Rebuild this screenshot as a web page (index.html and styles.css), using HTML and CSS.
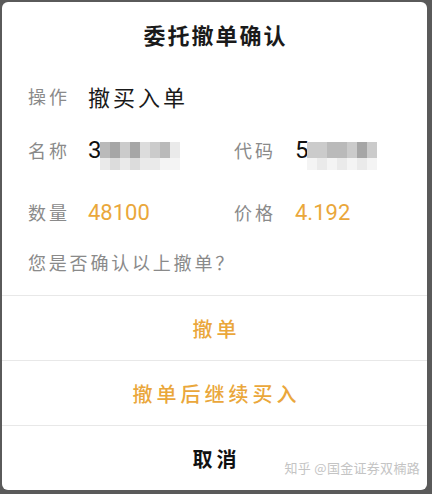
FILE: index.html
```html
<!DOCTYPE html>
<html lang="zh-CN">
<head>
<meta charset="utf-8">
<title>委托撤单确认</title>
<link rel="stylesheet" href="styles.css">
</head>
<body>
<div class="dialog">
  <div class="title">委托撤单确认</div>
  <div class="info">
    <div class="row r1">
      <span class="label">操作</span>
      <span class="value big">撤买入单</span>
    </div>
    <div class="row r2">
      <span class="label">名称</span>
      <span class="value num"><span class="digit">3</span><span class="mosaic m-name">
        <i class="b"></i><i class="a"></i><i class="c"></i><i class="a"></i><i class="d"></i><i class="c"></i><i class="b"></i><i class="e"></i>
        <i class="e"></i><i class="d"></i><i class="e"></i><i class="d"></i><i class="e"></i><i class="e"></i><i class="f"></i><i class="f"></i>
      </span></span>
      <span class="label">代码</span>
      <span class="value num"><span class="digit">5</span><span class="mosaic m-code">
        <i class="c"></i><i class="c"></i><i class="b"></i><i class="b"></i><i class="c"></i><i class="a"></i><i class="c"></i>
        <i class="f"></i><i class="e"></i><i class="f"></i><i class="e"></i><i class="f"></i><i class="e"></i><i class="f"></i>
      </span></span>
    </div>
    <div class="row r3">
      <span class="label">数量</span>
      <span class="value num orange">48100</span>
      <span class="label">价格</span>
      <span class="value num orange">4.192</span>
    </div>
    <div class="question">您是否确认以上撤单？</div>
  </div>
  <div class="actions">
    <div class="btn orange">撤单</div>
    <div class="btn orange">撤单后继续买入</div>
    <div class="btn dark">取消</div>
  </div>
  <div class="watermark">知乎 @国金证券双楠路</div>
</div>
</body>
</html>
```
FILE: styles.css
```css
html, body {
  margin: 0;
  padding: 0;
  background: #5a5a5a;
}
body {
  width: 432px;
  height: 494px;
  padding: 2px 0 0 2px;
  box-sizing: border-box;
  font-family: "Noto Sans CJK SC", "Noto Sans", sans-serif;
}
.dialog {
  position: relative;
  width: 425px;
  height: 488px;
  background: #fff;
  border-radius: 6px;
  display: flex;
  flex-direction: column;
  overflow: hidden;
}
.title {
  height: 64px;
  display: flex;
  align-items: center;
  justify-content: center;
  font-size: 22px;
  font-weight: 700;
  letter-spacing: 2px;
  color: #1a1a1a;
  padding-left: 2px;
}
.info {
  padding-left: 26px;
  height: 229px;
  display: flex;
  flex-direction: column;
}
.row {
  display: grid;
  grid-template-columns: 60px 146px 61px auto;
  align-items: center;
}
.r1 { height: 60px; }
.r2 { height: 48px; }
.r3 { height: 76px; }
.label {
  font-size: 18px;
  letter-spacing: 3px;
  color: #8a8a8a;
}
.value {
  color: #1a1a1a;
}
.big {
  font-size: 22px;
  letter-spacing: 3px;
  grid-column: 2 / 5;
}
.num {
  font-family: Roboto, "Noto Sans", sans-serif;
  font-size: 22px;
  display: flex;
  align-items: center;
}
.orange { color: #eaa73b; }
.digit {
  font-size: 24px;
  color: #111;
  line-height: 1;
}
.mosaic {
  display: grid;
  grid-template-rows: 16px 12px;
  margin-top: 12px;
  margin-left: -2px;
}
.mosaic i { display: block; }
.m-name { grid-template-columns: repeat(8, 10px); }
.m-code { grid-template-columns: repeat(7, 10px); }
.mosaic .a { background: #a6a6a6; }
.mosaic .b { background: #bababa; }
.mosaic .c { background: #cbcbcb; }
.mosaic .d { background: #dcdcdc; }
.mosaic .e { background: #eaeaea; }
.mosaic .f { background: #f4f4f4; }
.question {
  height: 24px;
  display: flex;
  align-items: center;
  font-size: 18px;
  letter-spacing: 2.8px;
  color: #8a8a8a;
}
.actions {
  display: flex;
  flex-direction: column;
}
.btn {
  height: 65px;
  border-top: 1px solid #e8e8e8;
  box-sizing: border-box;
  display: flex;
  align-items: center;
  justify-content: center;
  font-size: 20px;
  font-weight: 500;
  letter-spacing: 4px;
  padding-left: 4px;
}
.btn.dark { color: #111; font-weight: 700; }
.watermark {
  position: absolute;
  right: 7px;
  bottom: 13px;
  font-size: 13px;
  color: #c4c4c4;
  letter-spacing: 0.3px;
}
```
